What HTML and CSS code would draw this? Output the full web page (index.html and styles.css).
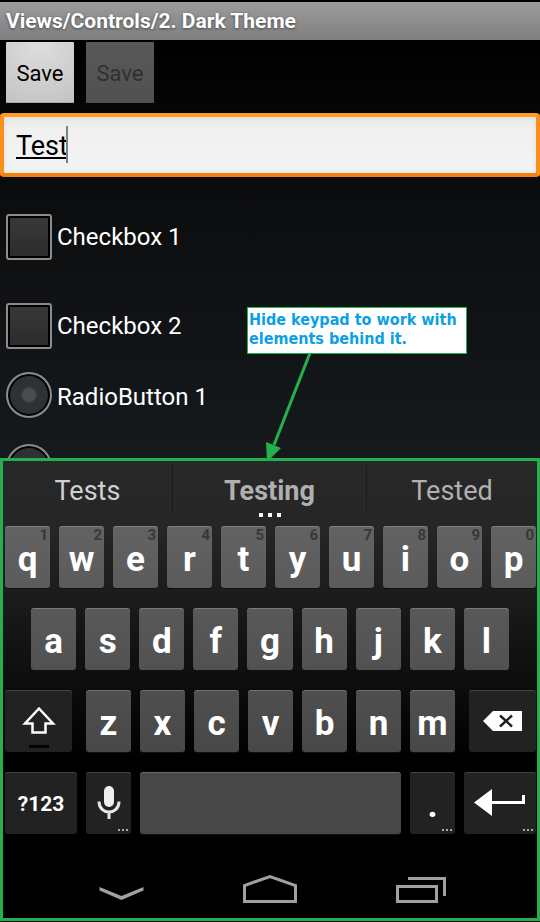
FILE: index.html
```html
<!DOCTYPE html>
<html lang="en">
<head>
    <meta charset="UTF-8">
    <meta name="viewport" content="width=device-width, initial-scale=1.0">
    <title>Views/Controls/2. Dark Theme</title>
    <link rel="stylesheet" href="styles.css">
</head>
<body>
    <main class="app">
        <h1 class="title">Views/Controls/2. Dark Theme</h1>
        <div class="actions">
            <button class="save">Save</button>
            <button class="save" disabled>Save</button>
        </div>
        <div class="field">
            <input class="edit" type="text" value="Test" aria-label="Text" spellcheck="false">
            <span class="caret"></span>
        </div>
        <div class="checks">
            <label class="option"><input class="box" type="checkbox">Checkbox 1</label>
            <label class="option"><input class="box" type="checkbox">Checkbox 2</label>
        </div>
        <div class="radios">
            <label class="option"><input class="box radio" type="radio" name="radio"><span class="radio-text">RadioButton 1</span></label>
            <label class="option"><input class="box radio" type="radio" name="radio" aria-label="RadioButton 2"></label>
        </div>
    </main>

    <section class="keyboard">
        <div class="suggestions">
            <button class="suggestion first">Tests</button>
            <button class="suggestion best">Testing</button>
            <button class="suggestion">Tested</button>
        </div>
        <div class="keys">
            <div class="row">
                <button class="key">q<span class="hint">1</span></button>
                <button class="key">w<span class="hint">2</span></button>
                <button class="key">e<span class="hint">3</span></button>
                <button class="key">r<span class="hint">4</span></button>
                <button class="key">t<span class="hint">5</span></button>
                <button class="key">y<span class="hint">6</span></button>
                <button class="key">u<span class="hint">7</span></button>
                <button class="key">i<span class="hint">8</span></button>
                <button class="key">o<span class="hint">9</span></button>
                <button class="key">p<span class="hint">0</span></button>
            </div>
            <div class="row middle">
                <button class="key">a</button>
                <button class="key">s</button>
                <button class="key">d</button>
                <button class="key">f</button>
                <button class="key">g</button>
                <button class="key">h</button>
                <button class="key">j</button>
                <button class="key">k</button>
                <button class="key">l</button>
            </div>
            <div class="row">
                <button class="key dark icon shift" aria-label="Shift">
                    <svg width="36" height="56" viewBox="0 0 36 56"><path d="M18 15.500L4 30.500h7.500v9h13v-9H32z" fill="none" stroke="#fff" stroke-width="2.500"/><path d="M8 52h20v3H8z" fill="#000"/></svg>
                </button>
                <button class="key">z</button>
                <button class="key">x</button>
                <button class="key">c</button>
                <button class="key">v</button>
                <button class="key">b</button>
                <button class="key">n</button>
                <button class="key">m</button>
                <button class="key dark icon delete" aria-label="Delete">
                    <svg width="40" height="20" viewBox="0 0 40 20"><path d="M0 10L10 0h29v20H10z" fill="#fff"/><path d="M17 4.500l12 11M29 4.500l-12 11" stroke="#222" stroke-width="2.500"/></svg>
                </button>
            </div>
            <div class="row">
                <button class="key dark symbols">?123</button>
                <button class="key dark icon" aria-label="Voice input">
                    <svg width="24" height="34" viewBox="0 0 24 34"><rect x="7" y="0" width="10" height="21" rx="5" fill="#eee"/><path d="M2 15.500c0 14 20 14 20 0M12 26v7" fill="none" stroke="#e6e6e6" stroke-width="3"/></svg>
                    <span class="more"></span>
                </button>
                <button class="key space" aria-label="Space"></button>
                <button class="key dark">.<span class="more"></span></button>
                <button class="key dark icon enter" aria-label="Enter">
                    <svg width="52" height="28" viewBox="0 0 52 28"><path d="M0 13.500L18 0v12h30V6h3v9H18v12z" fill="#fff"/></svg>
                    <span class="more"></span>
                </button>
            </div>
        </div>
        <nav class="nav">
            <button class="nav-button" aria-label="Back">
                <svg width="54" height="34" viewBox="0 0 54 34"><path d="M5.500 15v3.500L27.500 28l22-9.500V15l-22 9z" fill="#a0a0a0"/></svg>
            </button>
            <button class="nav-button" aria-label="Home">
                <svg width="54" height="34" viewBox="0 0 54 34"><path d="M1.500 29.500v-16L27 4.500l25.500 9v16z" fill="none" stroke="#a0a0a0" stroke-width="3"/></svg>
            </button>
            <button class="nav-button" aria-label="Recent apps">
                <svg width="54" height="34" viewBox="0 0 54 34"><path d="M5.500 14.500h39v15h-39zM16 6.500h36.500V24" fill="none" stroke="#a0a0a0" stroke-width="3"/></svg>
            </button>
        </nav>
    </section>

    <aside class="callout">
        Hide keypad to work with elements behind it.
        <svg class="arrow" width="60" height="108" viewBox="0 0 60 108"><path d="M54 0L18 92" stroke="#22b14c" stroke-width="3"/><path d="M10 89l15 6-14 14z" fill="#22b14c"/></svg>
    </aside>
</body>
</html>
```
FILE: styles.css
```css
* {
    box-sizing: border-box;
}
body {
    margin: 0;
    position: relative;
    background-color: #000;
    font-family: Roboto, sans-serif;
    color: #fff;
}
button {
    border: none;
    padding: 0;
    font-family: inherit;
    cursor: pointer;
}
svg {
    display: block;
}

/* Activity */
.app {
    height: 458px;
    overflow: hidden;
    border-top: 2px solid #000;
    background: linear-gradient(#000, #000 8%, #0c0d0f 45%, #161a1d);
}
.title {
    margin: 0;
    padding: 0 6px;
    background: linear-gradient(#9c9c9c, #7f7f7f);
    font-size: 21px;
    line-height: 38px;
    text-shadow: 0 1px 3px #444;
}
.actions {
    display: flex;
    gap: 12px;
    padding: 2px 6px 10px;
}
.save {
    width: 68px;
    height: 61px;
    padding-top: 2px;
    border-radius: 1px;
    background: radial-gradient(circle at 50% 0, #dedede, #c3c3c3);
    box-shadow: inset 0 -1px #aaa;
    color: #000;
    font-size: 22px;
}
.save:disabled {
    background: linear-gradient(#585958, #505050);
    box-shadow: none;
    color: #303030;
}
.field {
    position: relative;
}
.edit {
    display: block;
    width: 100%;
    height: 64px;
    padding: 2px 12px 0;
    border: 4px solid;
    border-color: #ff9c26 #fb8f1b #f47f0c;
    border-radius: 4px;
    outline: none;
    background: linear-gradient(#e8e8e8, #f0f0f0 20%, #f2f4f3);
    box-shadow: inset 0 0 4px #ddd;
    color: #000;
    font-family: inherit;
    font-size: 27px;
    text-decoration: underline;
    text-decoration-thickness: 2px;
    text-underline-offset: 2px;
}
.caret {
    position: absolute;
    top: 13px;
    left: 66px;
    width: 2px;
    height: 37px;
    background-color: #808080;
}
.checks,
.radios {
    display: flex;
    flex-direction: column;
    padding: 0 6px;
}
.checks {
    gap: 43px;
    margin-top: 37px;
}
.radios {
    gap: 26px;
    margin-top: 23px;
}
.option {
    display: flex;
    align-items: center;
    gap: 5px;
    font-size: 24px;
}
.radio-text {
    padding-top: 4px;
}
.box {
    appearance: none;
    width: 46px;
    height: 46px;
    margin: 0;
    border: 2px solid #8c8c8c;
    border-radius: 3px;
    background: linear-gradient(#383839, #2c2c2d);
    box-shadow: inset 0 0 0 2px #000;
}
.radio {
    border-radius: 50%;
    background: radial-gradient(circle, #4b4b4b 6px, #444 7px, #2f3335 8px, #2b2e30);
}

/* Keyboard */
.keyboard {
    border: 3px solid #22b14c;
    background: linear-gradient(#282828, #262626 15%, #000 66%);
}
.suggestions {
    display: grid;
    grid-template-columns: 7fr 8fr 7fr;
    height: 65px;
    padding: 4px 0 13px;
}
.suggestion {
    position: relative;
    border-right: 1px solid #1a1a1a;
    background: none;
    color: #b0b0b0;
    font-size: 27px;
    padding-top: 4px;
}
.suggestion:last-child {
    border-right: none;
}
.suggestion.first {
    color: #d0d0d0;
}
.suggestion.best {
    font-weight: bold;
}
.best::after {
    content: "";
    position: absolute;
    left: 50%;
    bottom: -4px;
    width: 4px;
    height: 4px;
    margin-left: -1px;
    background-color: #fff;
    box-shadow: -9px 0 #fff, 9px 0 #fff;
}
.keys {
    display: flex;
    flex-direction: column;
    gap: 20px;
    padding: 0 1px 0 2px;
}
.row {
    display: flex;
    gap: 9px;
}
.middle {
    padding: 0 27px 0 26px;
}
.key {
    position: relative;
    display: flex;
    flex: 45 1 0;
    justify-content: center;
    align-items: center;
    min-width: 0;
    height: 62px;
    padding-top: 4px;
    border-radius: 3px;
    background-color: rgba(255, 255, 255, 0.28);
    box-shadow: inset 0 1px rgba(255, 255, 255, 0.2), 0 1px #111;
    color: #fff;
    font-size: 35px;
    font-weight: bold;
}
.dark {
    background-color: #222;
    box-shadow: inset 0 1px #444;
}
.icon {
    padding-top: 0;
}
.shift,
.delete {
    flex-grow: 67;
}
.shift {
    margin-right: 5px;
}
.delete {
    margin-left: 5px;
}
.symbols,
.enter {
    flex-grow: 72;
}
.symbols {
    padding-top: 2px;
    font-size: 21px;
}
.space {
    flex-grow: 261;
}
.hint {
    position: absolute;
    top: 0;
    right: 2px;
    color: #383838;
    font-size: 15px;
}
.more {
    position: absolute;
    right: 11px;
    bottom: 3px;
    width: 2px;
    height: 2px;
    background-color: #aaa;
    box-shadow: 4px 0 #aaa, 8px 0 #aaa;
}
.nav {
    display: flex;
    justify-content: center;
    gap: 95px;
    padding: 38px 0 12px;
}
.nav-button {
    background: none;
}

/* Note over the screen */
.callout {
    position: absolute;
    top: 307px;
    left: 247px;
    width: 220px;
    height: 47px;
    padding: 2px 1px;
    border: 1px solid #22b14c;
    background-color: #fff;
    color: #0c9fe4;
    font-family: "DejaVu Sans Condensed", "DejaVu Sans", sans-serif;
    font-size: 16px;
    font-weight: bold;
    line-height: 19px;
}
.arrow {
    position: absolute;
    top: 45px;
    left: 8px;
}
```
